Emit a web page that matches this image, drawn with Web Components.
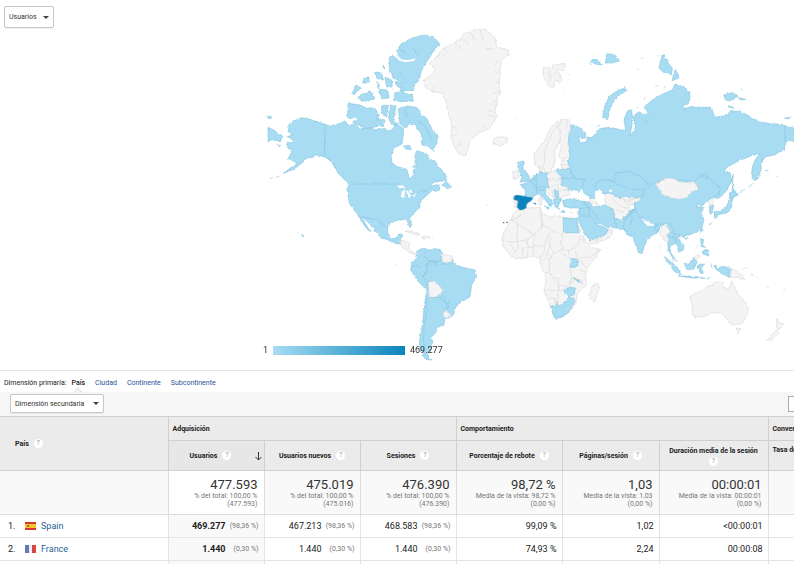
<!DOCTYPE html>
<html lang="es">
<head>
<meta charset="utf-8">
<title>Ubicación</title>
<style>
body{margin:0;background:#fff;color:#222;font:7px/12px Roboto,"Liberation Sans",sans-serif;overflow:hidden}
</style>
</head>
<body>
<geo-report></geo-report>
<script>
class BaseElement extends HTMLElement{
  connectedCallback(){
    if(!this.shadowRoot)this.attachShadow({mode:"open"}).innerHTML=this.render();
  }
}
customElements.define("menu-select",class extends BaseElement{
  render(){return `<style>
  :host{display:inline-grid;align-items:center;height:var(--h,20px)}
  select{grid-area:1/1;appearance:none;box-sizing:border-box;height:100%;width:100%;margin:0;padding:0 12px 0 4px;border:1px solid #c8c8c8;border-radius:2px;background:#fff;color:#333;font:7px/12px Roboto,sans-serif;box-shadow:0 1px 1px #0001}
  i{grid-area:1/1;justify-self:end;margin-right:5px;border:3px solid transparent;border-top-color:#444;border-bottom:0;pointer-events:none}
  </style><select aria-label="${this.getAttribute("label")}"><option>${this.getAttribute("value")}</option></select><i></i>`}
});
customElements.define("help-tip",class extends BaseElement{
  render(){return `<style>
  :host{display:inline-block;vertical-align:middle}
  button{display:grid;place-items:center;width:9px;height:9px;margin:0;padding:0;border:0;border-radius:50%;background:#fff;color:#999;font:7px/9px Roboto,sans-serif}
  </style><button aria-label="Ayuda">?</button>`}
});
customElements.define("world-map",class extends BaseElement{
  render(){return `<style>
  :host{display:block}
  svg{display:block;width:100%;height:auto}
  .b{fill:#a7dcf3;stroke:#88c6e0;stroke-width:2;stroke-linejoin:round}
  .g{fill:#f4f4f4;stroke:#d9d9d9;stroke-width:2;stroke-linejoin:round}
  .l{fill:none;stroke:#88c6e0;stroke-width:2}
  .k{fill:none;stroke:#d9d9d9;stroke-width:2}
  .w{fill:#fff;stroke:#fff;stroke-width:2}
  .s{fill:#0b84bd;stroke:#0a76aa;stroke-width:2}
  text{font:9px Roboto,sans-serif;fill:#333}
  </style>
  <svg viewBox="0 0 794 370" role="img" aria-label="Usuarios por país">
  <defs>
    <linearGradient id="ramp"><stop offset="0" stop-color="#a7dcf3"/><stop offset="1" stop-color="#0b84bd"/></linearGradient>
    <filter id="coast" filterUnits="userSpaceOnUse" x="260" y="20" width="540" height="350" color-interpolation-filters="sRGB"><feTurbulence type="fractalNoise" baseFrequency=".22" numOctaves="3" seed="4"/><feDisplacementMap in="SourceGraphic" scale="3" xChannelSelector="R" yChannelSelector="G"/></filter>
  </defs>
  <g filter="url(#coast)">
  <!-- North America -->
  <g transform="translate(260 20) scale(.33333)">
    <path class="b" d="M85 315 100 303 125 293 150 298 195 313 215 320 245 308 255 303 265 315 285 312 300 325 335 322 345 330 375 325 382 333 397 330 405 316 412 306 418 318 430 325 430 345 426 372 402 383 393 405 396 430 412 440 440 448 447 475 458 474 460 452 467 442 464 410 470 392 482 395 500 402 508 420 525 423 540 447 560 468 562 483 545 483 520 487 510 500 532 494 545 505 530 515 517 510 505 522 485 540 475 565 448 595 455 615 450 623 440 600 415 600 385 610 382 640 395 657 410 653 417 642 430 643 420 660 418 672 408 670 390 663 360 650 345 635 330 612 305 590 290 580 268 550 262 515 266 492 235 460 215 425 195 410 165 405 140 415 125 430 105 445 70 460 112 430 85 415 95 395 78 372 102 366 98 358 80 350 100 345 82 333Z"/>
    <path class="b" d="M295 585 310 600 328 630 332 635 320 626 306 605ZM545 495 560 485 574 502 562 506ZM24 322 40 330 68 348 60 365 40 358 24 365ZM24 289h8l2 6h-10ZM52 374l10 2-4 4ZM30 475l12-2M48 472l10-3"/>
    <path class="b" d="M410 90 425 70 455 55 490 45 520 50 538 70 520 95 500 125 485 150 475 185 465 190 460 212 420 212 430 190 400 175 388 145 388 115 400 105 412 112ZM405 218 430 214 440 225 457 222 458 243 420 245 400 240ZM415 266 440 258 470 262 480 280 500 295 515 325 535 350 530 370 520 392 500 378 486 375 483 340 465 315 445 308 437 325 420 312ZM265 250 300 255 320 265 345 262 355 290 350 320 320 325 295 315 275 305 262 285ZM365 258 385 255 380 290 365 285ZM392 255 408 260 400 300 412 318 396 315 386 295ZM300 225 330 213 345 235 320 245 295 235ZM275 218 288 195 302 203 285 225ZM345 155 365 160 370 180 350 175ZM375 172 395 180 397 205 380 200ZM358 208 380 210 385 235 365 235ZM310 175 328 170 325 190 308 188ZM405 185l20 5-3 14-12-5ZM350 185l10 8-5 14ZM430 378 445 376 455 388 440 388ZM355 295l20 5-6 20-12-4ZM370 135l5 12-5-3ZM460 435l6 4-6 4Z"/>
    <path d="M403 103Q422 133 465 118M370 245Q375 235 385 245M270 305 290 292" fill="none" stroke="#fff" stroke-width="6"/>
    <path class="w" d="M466 375 490 380 520 393 510 402 480 386ZM412 499 428 495 437 507 420 505ZM425 515 435 511 432 532 426 532ZM440 511 456 515 448 535 443 530ZM458 525 470 519 463 530Z"/>
    <path class="l" d="M195 313 193 408 215 425 230 445M272 492H418L440 508 460 525 485 512 505 515M295 588 325 595 350 598 380 622M440 260 435 285 450 300M420 160 440 180M455 80 475 105M420 90 440 100M475 300 500 325 515 360M405 670 412 655"/>
  </g>
  <!-- Atlantic islands, Greenland -->
  <g transform="translate(400 20) scale(.33333)">
    <path class="g" d="M110 110 130 85 160 70 185 55 190 42 215 35 225 28 260 30 285 55 290 80 325 90 328 105 305 120 300 150 298 200 302 215 290 240 285 275 290 290 280 310 260 330 240 335 225 350 210 360 205 385 195 408 180 405 165 385 152 350 155 310 145 280 137 240 125 218 95 215 75 200 70 180 100 160 105 150 90 130ZM277 358 290 352 320 352 322 368 300 378 280 370ZM430 145 445 140 455 150 460 135 495 130 495 150 475 155 485 190 470 180 458 208 445 195 430 170Z"/>
    <path class="k" d="M110 110l25-8M130 85l25 18M165 70l20 18M185 55l22 20M215 40l10 25M240 30l10 30M258 85l20 2M298 120l-12 15M300 155h-15M298 185l-12 5M300 215l-20 5M290 240l-18 10M285 275l-25-5M285 290l-28-6M260 325l-15-10M157 320l15 5M155 350l18-6M167 380l15-8M137 240l12 5M95 215l8-15M450 150v35M470 145l-8 20M520 132l5 2M490 208l3 2M343 295l4 2M503 164l4 1"/>
  </g>
  <!-- Caribbean and South America -->
  <g transform="translate(290 170) scale(.33333)">
    <path class="b" d="M378 245 400 233 415 240 450 238 460 255 490 270 500 288 555 300 560 320 545 345 540 380 500 405 490 435 465 450 460 465 435 475 440 485 425 500 430 520 420 545 408 550 392 540 388 515 395 480 402 420 410 360 385 335 362 300 365 280 378 265ZM396 555 412 552 425 570 408 568ZM22 188l4 1M35 193l6 5-2 3ZM316 286l4 2"/>
    <path class="g" d="M328 212 342 212 358 218 355 235 372 248 382 245 378 252 363 252 340 235 332 225ZM452 252 485 258 487 275 460 278ZM415 335 430 332 445 345 460 360 445 375 435 383 418 382ZM462 425 472 425 482 435 475 445 460 440ZM345 184 360 182 390 195 380 197 360 188ZM395 200 410 198 420 204 400 205ZM425 204h6M428 570h8M588 104l5 2"/>
    <path class="l" d="M408 240 405 260 415 272 440 278 440 288 410 280 412 302 396 318 408 335M365 290 382 285 395 295M415 272 450 275 455 258M412 302 400 320M410 385 410 430 402 470 400 545M418 382 440 383 460 378 480 395 470 410 465 395 450 385M480 405 462 425M490 275 475 285 455 280M430 332 412 335 410 360"/>
  </g>
  <!-- Africa -->
  <g transform="translate(490 190) scale(.33333)">
    <path class="g" d="M75 62 100 55 150 52 158 70 185 82 195 75 220 82 260 85 262 100 275 130 290 160 300 172 333 178 315 205 290 235 285 265 290 285 262 310 258 340 240 365 215 382 195 385 188 370 180 345 163 305 168 265 160 240 150 225 150 205 130 198 100 205 75 205 55 190 38 165 40 130 65 85ZM305 290 325 278 327 295 315 335 302 332 298 318ZM298 152 335 140 352 112 370 122 365 135 345 150 300 163Z"/>
    <path class="k" d="M100 55 105 70 65 90M65 90 82 100V155H50M82 100 130 135M82 155 110 150 135 130 155 115 150 52M155 70 158 105 185 120 220 135V128M135 130 130 165 160 170 180 125M130 165 130 198M110 150 115 170 112 200M97 172V203M80 155 85 175 70 190M60 160 75 185M180 125V165L165 205M160 170 165 180 150 205M180 165 190 190 215 180 215 130M215 180 235 180 265 170 270 140M270 140 300 170M235 180 240 205 265 208 285 200 300 205 330 178M265 208 290 235M190 190 180 205 155 210M180 205 178 245 165 250M178 245 190 265H205V285L240 290 245 265 240 232M165 300 210 302 225 300M205 300V335M205 285V300M245 265 275 270 280 285M240 285 255 265M178 325 195 325V345M240 205 215 190M270 240 285 245M255 180 262 205M110 172H130M315 150 340 143"/>
    <path class="b" d="M220 82 240 87 260 85 262 98 267 128 220 128ZM245 206 261 208 264 226 252 233 239 231ZM222 300 240 292 255 295 254 312 240 320 230 312ZM182 348 198 350 200 335 205 348 225 335 240 322 254 325 250 345 235 368 215 382 195 385 188 370ZM262 82 270 70 300 75 325 105 345 112 355 120 345 135 315 145 298 152 285 130 268 100ZM250 262l14 8 6 8-6-2Z"/>
    <path class="k" d="M228 352 236 348 238 356 230 359Z"/>
    <path d="M37 98h6M49 97h5" stroke="#555" stroke-width="3"/>
  </g>
  <!-- Europe and western Asia -->
  <g transform="translate(490 110) scale(.33333)">
    <path class="g" d="M133 150 133 130 145 115 165 90 178 60 195 40 215 28 240 30 240 50 235 70 238 90 232 100 242 130 235 142 215 148 205 140 215 105 205 98 192 125 197 150 190 170 178 190 165 183 158 165 148 172 137 168ZM215 152 235 150 235 172 220 178 212 168ZM68 185 85 182 88 200 70 207ZM148 172 158 175 156 186 148 185ZM172 188 205 183 215 195 213 225 232 236 240 250 235 256 210 262 200 270 185 262 165 240 175 232 170 210ZM147 262 155 262 155 285 147 285ZM345 250 362 247 385 260 410 270 450 262 453 275 420 285 418 310 395 330 375 325 370 300 345 285ZM72 270 84 272 82 293 74 292ZM295 258 320 268 322 284 302 278ZM260 304l8 0-2 20ZM242 308h8"/>
    <path class="k" d="M215 30 205 50 190 60 178 90 165 120 163 160M205 50 212 75 208 98M232 35 228 55M172 210 213 210M175 232 205 222M185 235 190 262M205 225 205 258M205 240 235 242M215 165 235 162M365 262 390 290 415 295M370 298 400 305M395 262 415 285 440 275"/>
    <path class="b" d="M83 155 98 150 103 160 98 170 108 185 118 200 115 212 90 217 96 203 93 190 84 175ZM90 225 105 220 122 210 140 190 150 185 172 190 172 212 176 232 165 242 167 252 182 270 190 282 183 292 174 278 158 262 148 252 138 254 126 265 103 258 106 240ZM163 288 177 292 175 299ZM200 180 240 175 250 195 248 205 285 210 292 225 272 235 268 246 252 240 238 240 230 232 213 225 218 200 205 192ZM192 240 205 246 206 262 196 264ZM190 268 215 265 212 275 205 280 208 298 196 290ZM208 305h16v3ZM218 272 240 265 270 273 298 276 310 290 330 288 345 285 370 298 375 325 392 330 418 308 432 298 450 315 445 345 415 372 400 358 380 354 355 352 330 340 322 345 300 318 265 318 268 294 250 294 222 290Z"/>
    <path class="l" d="M120 213 138 228 140 250M140 190 138 210 142 232 176 232M140 232 138 242 165 240M138 205 125 210M205 205 248 205M270 272 298 290 296 300 300 318M268 296 296 292M298 290 325 330M375 325 380 352M270 305 285 310M430 300 410 330"/>
    <path class="w" d="M238 258 246 248 262 243 275 250 298 262 294 270 270 266 244 266Z"/>
  </g>
  <!-- Russia and Kazakhstan -->
  <g transform="translate(594 20) scale(.33333)">
    <path class="b" d="M-70 315-47 320-24 340-27 355-45 350-42 370-22 365-20 350-7 355 8 335 25 325 50 322 80 330 95 328 90 300 102 268 113 270 116 300 108 348 122 330 122 285 135 275 150 285 165 280 150 262 175 240 200 225 235 210 245 192 260 197 287 215 288 240 265 265 300 262 330 262 352 262 362 292 400 285 410 272 440 275 470 290 490 305 535 312 560 312 600 325 602 365 582 360 575 370 570 390 540 405 515 410 500 430 502 450 485 482 472 475 475 440 485 415 500 400 470 408 440 420 400 440 390 455 410 460 412 485 395 515 375 535 362 528 380 505 345 475 335 462 318 468 300 485 270 488 235 475 220 490 185 488 178 498 152 515 146 532 75 532 45 518 30 522 22 510 8 510 6 535-12 535-27 520-37 505-27 480-62 473-72 445-78 425-70 400-77 370-74 340Z"/>
    <path class="b" d="M95 203 100 210 80 222 60 240 45 270 42 300 25 290 32 260 45 230 70 212ZM210 103 220 125 235 145 232 165 210 158 195 145 200 120ZM245 152 258 172 235 182 238 165ZM390 225 410 218 430 225 425 235 405 243 392 238ZM432 233 455 238 440 240ZM405 255 420 265 405 262ZM572 294 590 292 580 298ZM0 118 12 120 22 135 0 132-10 125ZM35 110 50 98 70 115 78 122 50 130 35 128ZM-15 130l8 4M418 460 412 485 424 515 418 535 414 515ZM130 147l4 2M142 114h6M188 107h6M152 235v4M184 198l6-2M210 200l5 2M8 320l10-4M128 263l3 3M440 208l5 2M515 450l8 4M548 468l4 2M405 535 412 518 432 525 412 535Z"/>
    <path class="l" d="M178 498 160 490 140 470 110 455 70 458 60 480 20 480 2 492 8 510M573 315V365M152 305l8-5M30 322l8 8"/>
    <path class="w" d="M4 515 18 508 20 522 12 525 22 545 12 553 4 538ZM45 512l8-3-2 8Z"/>
  </g>
  <!-- East Asia and Oceania -->
  <g transform="translate(630 170) scale(.33333)">
    <path class="b" d="M40 80 40 62 70 40 112 25 192 35 210 18 225 12 237 25 272 55 265 75 245 85 235 92 215 108 205 102 200 110 222 112 213 125 222 150 215 175 195 190 165 197 162 203 150 195 146 206 162 225 160 240 145 247 144 230 140 222 122 225 118 240 128 258 140 272 130 268 115 240 112 200 108 195 112 165 90 168 88 182 75 190 55 205 42 230 35 250 25 248 8 200-8 195-20 172-15 150 5 130 15 115 12 100 32 85Z"/>
    <path class="g" d="M77 40 112 25 127 25 162 38 192 35 205 55 180 70 165 85 130 85 95 72ZM-5 92 30 83 30 90 5 105ZM94 172 108 160 120 185 110 195 116 215 104 214 92 190ZM235 92 255 84 248 102 238 104ZM175 275 190 266 205 252 208 262 190 275ZM300 295 325 305 345 328 320 322 300 322ZM128 255 143 275 135 272ZM180 380 200 368 220 360 230 350 250 345 255 335 280 338 278 350 297 360 305 333 315 355 325 375 345 395 355 412 350 435 335 462 310 465 295 455 285 440 275 430 250 428 225 438 195 443 185 430 188 410ZM318 475 332 475 326 492ZM440 445 448 458 462 462 445 480 440 472ZM438 478 446 488 425 510 412 510ZM335 300l15-8M360 312l12 6M378 320l10 6M402 374l8 6M458 362l8-5M410 350l4 4M208 215l-14 32M90 225l2 10M38 252l5 5"/>
    <path class="w" d="M38 149 52 152 72 161 70 167 48 162Z"/>
    <path class="b" d="M238 108 248 105 250 126 240 130ZM254 128 275 120 292 105 298 86 308 84 305 110 292 128 270 133 262 140ZM298 72 310 66 325 72 302 84ZM253 132l7 10-5 3ZM213 176 217 182 212 190ZM212 205 220 210 218 225 226 232 214 230ZM222 240 236 240 236 258 218 252ZM162 204l8 0-3 5ZM103 260 125 275 150 300 150 315 132 303ZM145 318 180 318 225 325 185 324ZM162 280 178 282 190 264 202 275 190 300 170 298ZM205 285 225 282 212 290 220 308 205 305ZM252 288 265 298 275 289 300 293 300 322 285 315 260 300ZM243 278l3 18M230 325l12-3M327 70 345 58M355 52 370 40M378 30 392 15M240 165l6-8"/>
    <path class="l" d="M-60 30-10 55 40 60M12 100 20 130 40 148 75 162 90 162 120 160 132 190 150 194M75 162 75 180 88 182M130 192 145 215M112 200 130 200 140 222M15 115-5 130-15 150M237 25 210 18M-5 130 8 145 0 165"/>
  </g>
  </g>
  <g transform="translate(490 110) scale(.33333)">
    <path class="s" d="M72 260 78 256 90 257 104 260 127 264 125 270 113 278 108 285 108 293 101 297 90 300 82 292 85 272 72 268ZM132 280h5v3Z"/>
  </g>
  <rect x="273" y="346" width="132" height="9" fill="url(#ramp)"/>
  <text x="263" y="353">1</text><text x="410" y="353">469.277</text>
  </svg>`}
});
customElements.define("dimension-nav",class extends BaseElement{
  render(){return `<style>
  :host{display:flex;box-sizing:border-box;align-items:center;gap:10px;height:22px;padding:2px 4px 0;border-top:1px solid #e4e4e4}
  nav{display:flex;gap:10px;align-items:center}
  span{margin-right:-5px}
  a{color:#2a5298;text-decoration:none}
  a[aria-current]{position:relative;color:#222;font-weight:500}
  a[aria-current]::after{content:"";position:absolute;left:50%;top:12px;width:6px;height:6px;background:#f6f6f6;border:1px solid #ddd;border-width:1px 0 0 1px;transform:translateX(-50%) rotate(45deg);clip-path:polygon(0 0,100% 0,0 100%)}
  </style><span>Dimensión primaria:</span><nav><a href="#pais" aria-current="page">País</a><a href="#ciudad">Ciudad</a><a href="#continente">Continente</a><a href="#subcontinente">Subcontinente</a></nav>`}
});
customElements.define("country-flag",class extends BaseElement{
  render(){
    const es=this.getAttribute("code")==="es";
    return `<style>:host{display:inline-block}svg{display:block;width:11px;height:8px}</style><svg viewBox="0 0 11 8">${es?'<path fill="#d5392d" d="M0 0h11v8H0z"/><path fill="#f7c62f" d="M0 2h11v4H0z"/><path fill="#b5662c" d="M2 3h2v2H2z"/>':'<path fill="#eef0f5" d="M0 0h11v8H0z"/><path fill="#6479b5" d="M0 0h4v8H0z"/><path fill="#d5473f" d="M7 0h4v8H7z"/>'}</svg>`}
});
customElements.define("country-table",class extends BaseElement{
  render(){
    const total=(n,a,b,c="")=>`<td class="${c}"><strong>${n}</strong><small>${a}<br>${b}</small></td>`;
    const val=(n,p,c="")=>`<td class="${c}"><span class="v">${n}<small>${p}</small></span></td>`;
    const row=(i,code,name,u,n,s,p,r,g,d)=>`<tr class="row"><th scope="row"><span class="name"><span class="n">${i}.</span><country-flag code="${code}"></country-flag><a href="#${code}">${name}</a></span></th>${val(u,p,"sorted")}${val(n,p)}${val(s,p)}<td class="m">${r}</td><td class="m">${g}</td><td class="m">${d}</td><td></td></tr>`;
    return `<style>
  :host{display:block}
  table{width:100%;table-layout:fixed;border-collapse:collapse;font-size:9px;line-height:12px}
  th,td{box-sizing:border-box;padding:0;border:1px solid #dcdcdc;border-width:1px 0 1px 1px;overflow:hidden}
  th:first-child,td:first-child{border-left:0}
  thead th{background:#ebebeb;border-color:#cfcfcf;font-size:7px;font-weight:700;text-align:center}
  thead tr:nth-child(2) th:first-child{border-left:1px solid #cfcfcf}
  thead .group{height:24px;padding-left:4px;text-align:left;white-space:nowrap}
  thead tr:nth-child(2) th{height:30px}
  thead .country{padding-left:15px;text-align:left}
  thead .sort{background:#e7e7e7}
  .label{display:flex;align-items:center;justify-content:center;gap:5px}
  .start{justify-content:start}
  .sort>.label{padding:0 1px 0 21px;justify-content:space-between}
  .sort svg{width:9px;height:10px;fill:none;stroke:#333}
  .stack{flex-direction:column;gap:0;line-height:11px}
  .cut{white-space:nowrap;justify-content:start;padding:0 0 12px 4px}
  .total td{height:44px;padding:0 6px 0 0;text-align:right;background:#f9f9f9;vertical-align:middle}
  .total .sorted{background:#fff}
  .total strong{display:block;font-size:13px;line-height:15px;font-weight:400;color:#333}
  .total small{display:block;font-size:7px;line-height:8px;color:#777}
  .row>*{height:23px;border-color:#e4e4e4}
  .row td{text-align:right}
  .row th{font-weight:400;text-align:left}
  .name{display:flex;align-items:center;padding-left:8px}
  .n{width:17px}
  a{color:#2b5f93;text-decoration:none;margin-left:5px}
  .row .sorted{background:#f9f9f9;font-weight:700}
  .v{display:grid;grid-template-columns:1fr 33px;padding-right:5px}
  .v small{font-size:7px;font-weight:400;color:#777}
  .row .m{padding-right:5px}
  </style>
  <table><colgroup><col style="width:168px"><col style="width:96px"><col style="width:96px"><col style="width:96px"><col style="width:106px"><col style="width:97px"><col style="width:109px"><col></colgroup>
  <thead><tr><th class="country" rowspan="2"><span class="label start">País<help-tip></help-tip></span></th><th class="group" colspan="3">Adquisición</th><th class="group" colspan="3">Comportamiento</th><th class="group">Conversiones</th></tr>
  <tr><th class="sort" aria-sort="descending"><span class="label"><span class="label">Usuarios<help-tip></help-tip></span><svg viewBox="0 0 9 10"><path d="M4.500 1v8M1.500 6l3 3 3-3"/></svg></span></th>
  <th><span class="label">Usuarios nuevos<help-tip></help-tip></span></th><th><span class="label">Sesiones<help-tip></help-tip></span></th><th><span class="label">Porcentaje de rebote<help-tip></help-tip></span></th><th><span class="label">Páginas/sesión<help-tip></help-tip></span></th><th><span class="label stack">Duración media de la sesión<help-tip></help-tip></span></th><th><span class="label cut">Tasa de conversiones</span></th></tr></thead>
  <tbody><tr class="total"><td></td>${total("477.593","% del total: 100,00 %","(477.593)","sorted")}${total("475.019","% del total: 100,00 %","(475.016)")}${total("476.390","% del total: 100,00 %","(476.390)")}${total("98,72 %","Media de la vista: 98,72 %","(0,00 %)")}${total("1,03","Media de la vista: 1,03","(0,00 %)")}${total("00:00:01","Media de la vista: 00:00:01","(0,00 %)")}<td></td></tr>
  ${row(1,"es","Spain","469.277","467.213","468.583","(98,36 %)","99,09 %","1,02","&lt;00:00:01")}
  ${row(2,"fr","France","1.440","1.440","1.440","(0,30 %)","74,93 %","2,24","00:00:08")}
  <tr class="row"><th></th><td class="sorted"></td><td></td><td></td><td></td><td></td><td></td><td></td></tr></tbody></table>`}
});
customElements.define("geo-report",class extends BaseElement{
  render(){return `<style>
  :host{display:block}
  .map{display:grid}
  .map>*{grid-area:1/1}
  .metric{--h:22px;margin:6px 0 0 4px;width:50px;place-self:start;z-index:1}
  .bar{display:flex;box-sizing:border-box;align-items:start;justify-content:space-between;height:24px;padding:2px 0 0 10px;background:#f6f6f6;overflow:hidden}
  .bar menu-select{--h:19px;width:94px}
  input{box-sizing:border-box;flex:none;width:120px;height:16px;margin:2px -114px 0 0;border:1px solid #aaa;background:#fff}
  </style>
  <div class="map"><world-map></world-map><menu-select class="metric" label="Métrica" value="Usuarios"></menu-select></div>
  <dimension-nav></dimension-nav>
  <div class="bar"><menu-select label="Dimensión" value="Dimensión secundaria"></menu-select><input type="search" aria-label="Buscar"></div>
  <country-table></country-table>`}
});
</script>
</body>
</html>
